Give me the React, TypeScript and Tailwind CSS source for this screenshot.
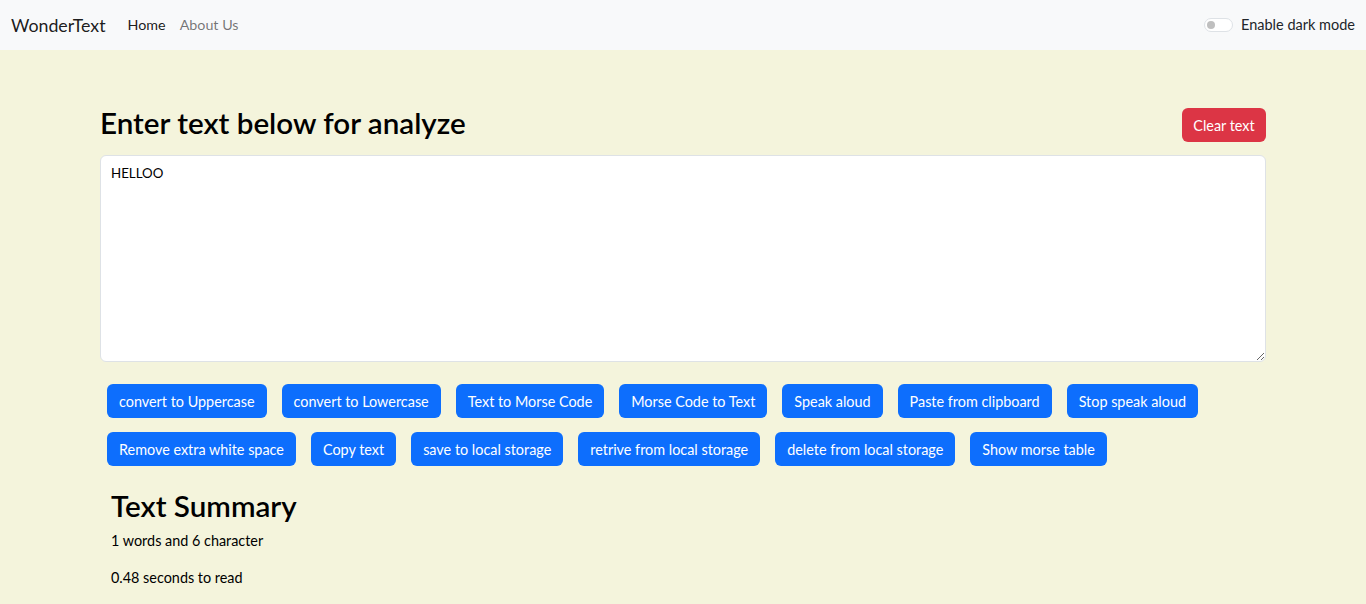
import { useState } from "react";

const actions = [
    ["convert to Uppercase", "convert to Lowercase", "Text to Morse Code", "Morse Code to Text", "Speak aloud", "Paste from clipboard", "Stop speak aloud"],
    ["Remove extra white space", "Copy text", "save to local storage", "retrive from local storage", "delete from local storage", "Show morse table"],
];

export default function App() {
    const [text, setText] = useState("HELLOO");
    const words = text.split(/\s+/).filter((w) => w.length > 0).length;

    return (
        <div className="min-h-[604px] bg-[#f4f4dc] font-['Lato','Noto_Sans',sans-serif] text-[#212529]">
            <nav className="flex h-[50px] items-center bg-[#f8f9fa] pl-[11px] pr-[11px]">
                <span className="mr-[22px] text-[17.8px] text-black/90">WonderText</span>
                <a className="mr-[14px] text-[14.3px] text-black/90" href="#">Home</a>
                <a className="text-[14.3px] text-black/55" href="#">About Us</a>
                <div className="ml-auto flex items-center">
                    <span className="relative mr-[8px] h-[14px] w-[29px] rounded-full border border-[#dee2e6] bg-white">
                        <span className="absolute left-[2px] top-[2px] h-[8px] w-[8px] rounded-full bg-[#bfbfbf]"></span>
                    </span>
                    <span className="text-[14.5px]">Enable dark mode</span>
                </div>
            </nav>

            <div className="mx-[100px] pt-[58px]">
                <div className="flex items-start justify-between">
                    <h2 className="text-[29.6px] font-semibold leading-[30px] text-black">Enter text below for analyze</h2>
                    <button className="h-[34px] w-[84px] rounded-[6px] bg-[#dc3545] pt-[1px] text-[14.4px] text-white">Clear text</button>
                </div>
                <textarea
                    className="mt-[13px] block h-[207px] w-full rounded-[6px] border border-[#dee2e6] bg-white px-[10px] py-[8px] text-[13.3px] text-black outline-none"
                    value={text}
                    onChange={(e) => setText(e.target.value)}
                />

                <div className="mt-[22px] flex flex-col gap-[14px] px-[7px]">
                    {actions.map((row, i) => (
                        <div key={i} className="flex gap-[15px]">
                            {row.map((label) => (
                                <button key={label} className="h-[34px] rounded-[6px] bg-[#0d6efd] px-[12px] pt-[1px] text-[14.4px] text-white">
                                    {label}
                                </button>
                            ))}
                        </div>
                    ))}
                </div>

                <div className="px-[11px] pt-[22px]">
                    <h2 className="text-[29.6px] font-semibold leading-[36px] text-black">Text Summary</h2>
                    <p className="mt-[6px] text-[14.4px] text-black">{words} words and {text.length} character</p>
                    <p className="mt-[15px] text-[14.4px] text-black">{(0.08 * text.length).toFixed(2)} seconds to read</p>
                </div>
            </div>
        </div>
    );
}
